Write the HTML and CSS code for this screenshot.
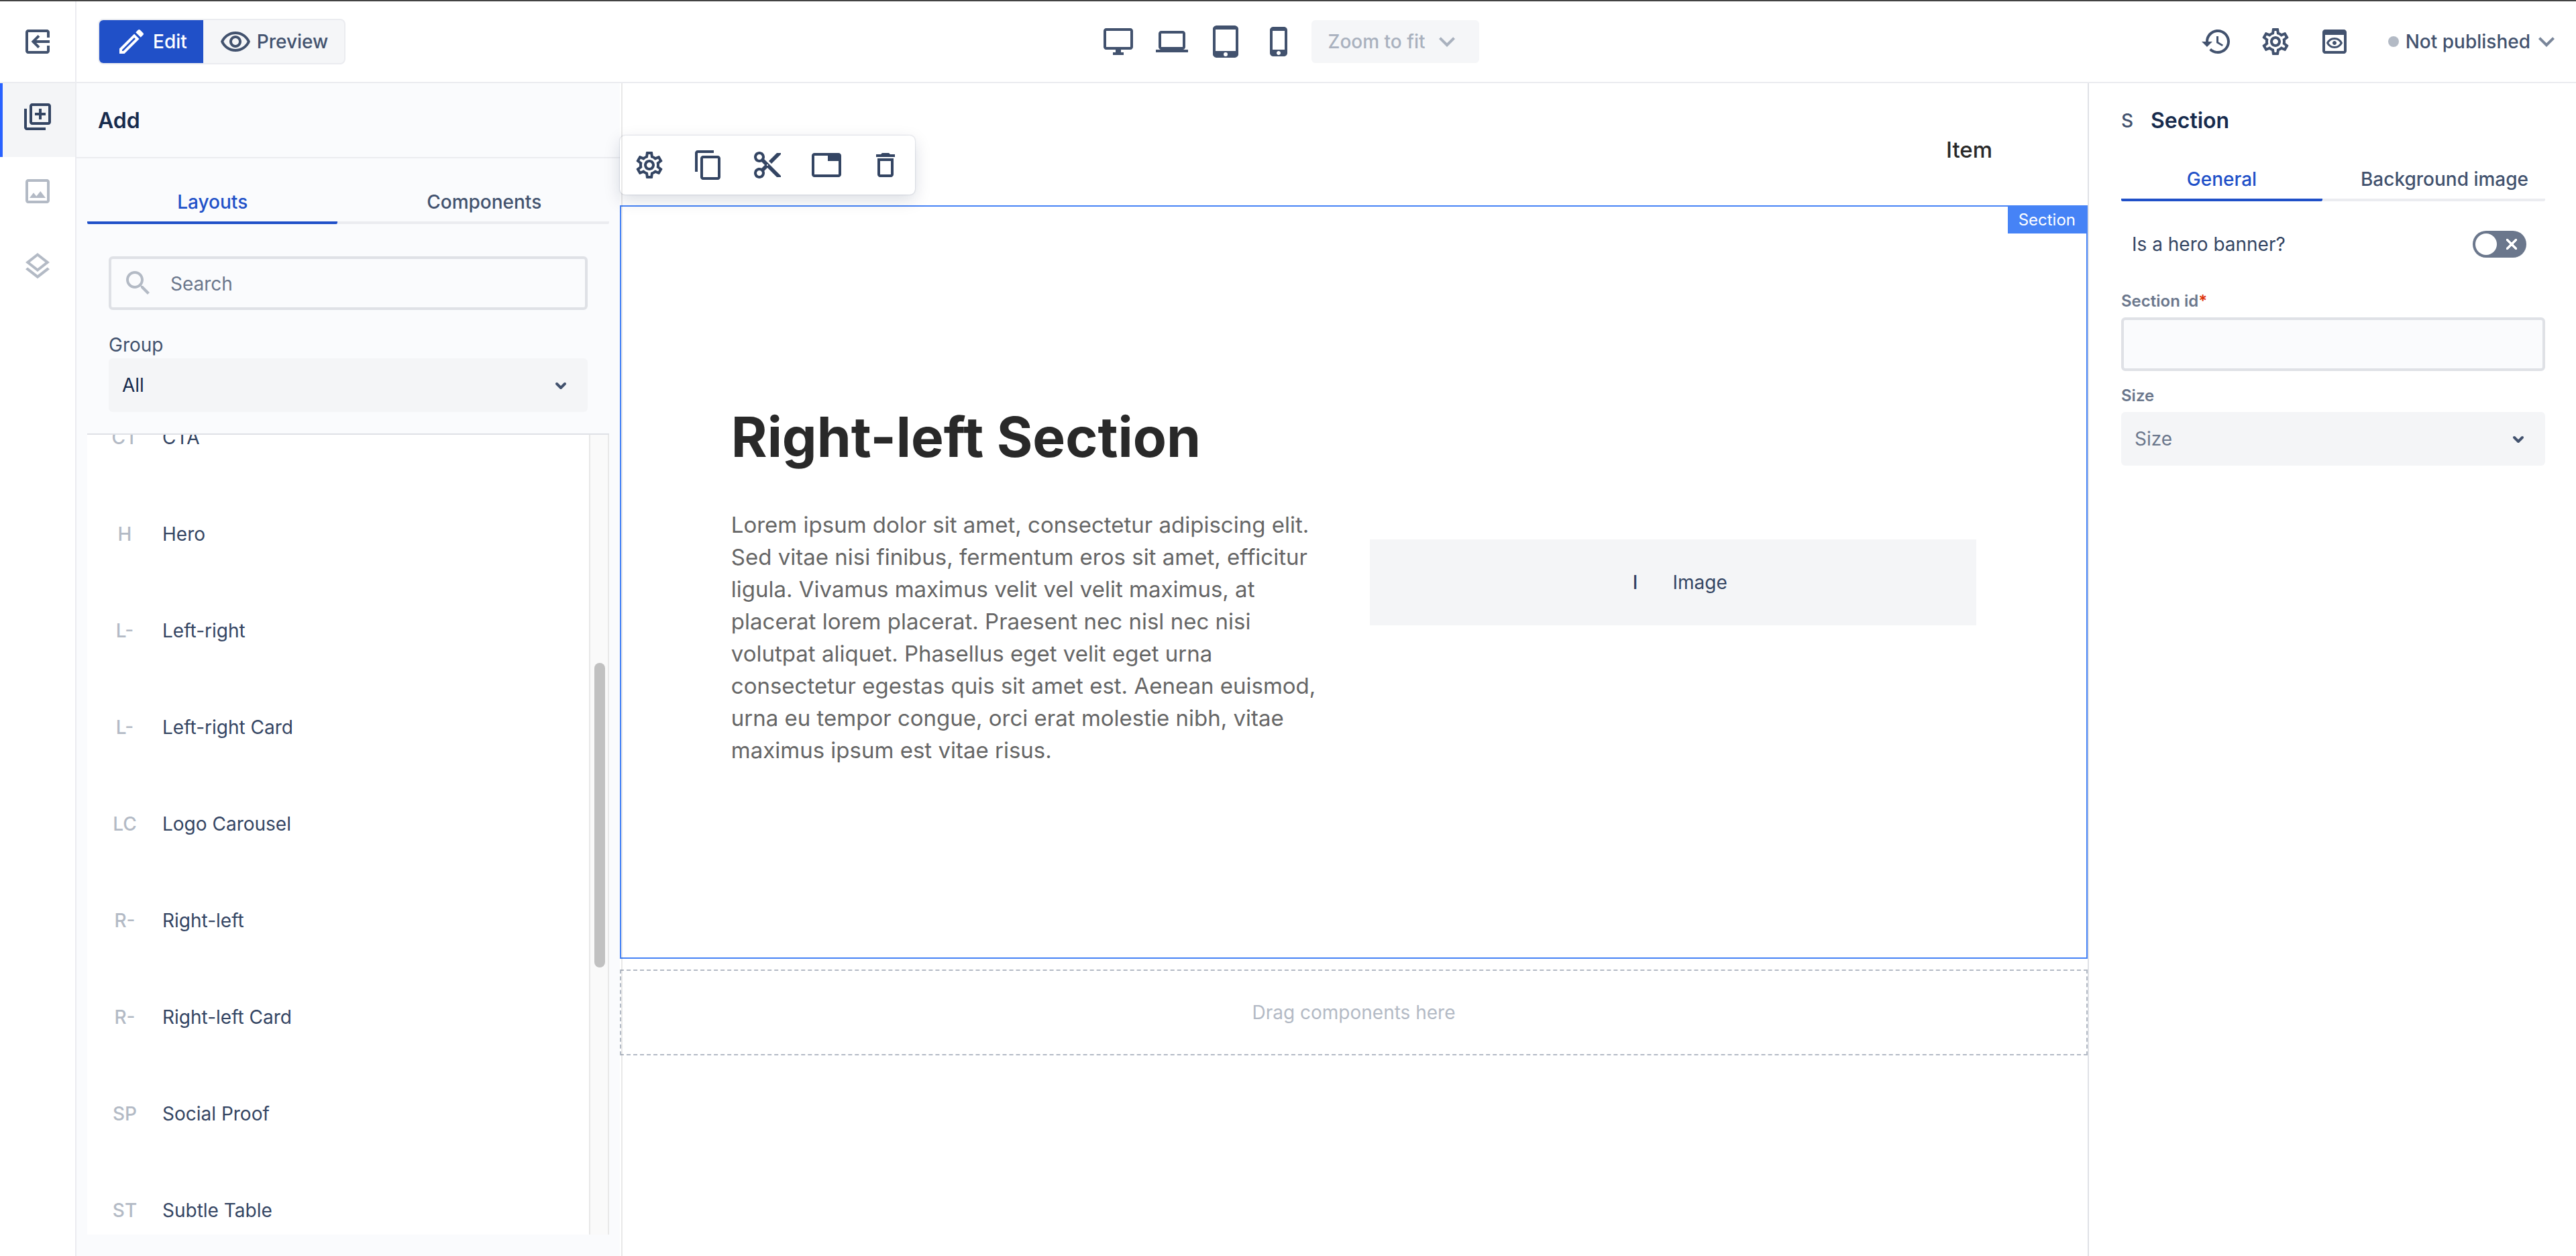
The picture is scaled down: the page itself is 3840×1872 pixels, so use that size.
FILE: index.html
```html
<!DOCTYPE html>
<html lang="en">
<head>
<meta charset="utf-8">
<title>Page editor</title>
<link rel="stylesheet" href="styles.css">
</head>
<body>
<svg class="sprite" aria-hidden="true">
  <symbol id="gear" viewBox="0 0 24 24"><path d="M19.43 12.98c.04-.32.07-.64.07-.98 0-.34-.03-.66-.07-.98l2.11-1.65c.19-.15.24-.42.12-.64l-2-3.46c-.09-.16-.26-.25-.44-.25-.06 0-.12.01-.17.03l-2.49 1c-.52-.4-1.08-.73-1.69-.98l-.38-2.65C14.46 2.18 14.25 2 14 2h-4c-.25 0-.46.18-.49.42l-.38 2.65c-.61.25-1.17.59-1.69.98l-2.49-1c-.06-.02-.12-.03-.18-.03-.17 0-.34.09-.43.25l-2 3.46c-.13.22-.07.49.12.64l2.11 1.65c-.04.32-.07.65-.07.98 0 .33.03.66.07.98l-2.11 1.65c-.19.15-.24.42-.12.64l2 3.46c.09.16.26.25.44.25.06 0 .12-.01.17-.03l2.49-1c.52.4 1.08.73 1.69.98l.38 2.65c.03.24.24.42.49.42h4c.25 0 .46-.18.49-.42l.38-2.65c.61-.25 1.17-.59 1.69-.98l2.49 1c.06.02.12.03.18.03.17 0 .34-.09.43-.25l2-3.46c.12-.22.07-.49-.12-.64l-2.11-1.65zm-1.98-1.71c.04.31.05.52.05.73 0 .21-.02.43-.05.73l-.14 1.13.89.7 1.08.84-.7 1.21-1.27-.51-1.04-.42-.9.68c-.43.32-.84.56-1.25.73l-1.06.43-.16 1.13-.2 1.35h-1.4l-.19-1.35-.16-1.13-1.06-.43c-.43-.18-.83-.41-1.23-.71l-.91-.7-1.06.43-1.27.51-.7-1.21 1.08-.84.89-.7-.14-1.13c-.03-.31-.05-.54-.05-.74s.02-.43.05-.73l.14-1.13-.89-.7-1.08-.84.7-1.21 1.27.51 1.04.42.9-.68c.43-.32.84-.56 1.25-.73l1.06-.43.16-1.13.2-1.35h1.39l.19 1.35.16 1.13 1.06.43c.43.18.83.41 1.23.71l.91.7 1.06-.43 1.27-.51.7 1.21-1.07.85-.89.7.14 1.13zM12 8c-2.210 0-4 1.790-4 4s1.790 4 4 4 4-1.790 4-4-1.790-4-4-4zm0 6c-1.100 0-2-.9-2-2s.9-2 2-2 2 .9 2 2-.9 2-2 2z"/></symbol>
</svg>

<header class="topbar">
  <div class="topbar-start">
    <div class="topbar-exit">
      <button class="icon-btn" aria-label="Exit"><svg class="icon" viewBox="0 0 24 24"><path d="M21 9V5c0-1.100-.9-2-2-2H5c-1.100 0-2 .9-2 2v14c0 1.100.9 2 2 2h14c1.100 0 2-.9 2-2v-4h-2v4H5V5h14v4z"/><path d="M21 11H11.100l2.600-2.600L12.300 7l-5 5 5 5 1.400-1.400L11.100 13H21z"/></svg></button>
    </div>
    <div class="mode">
      <button class="mode-btn mode-btn-active"><svg class="icon" viewBox="0 0 24 24"><path d="M14.060 9.020l.92.920L5.920 19H5v-.92l9.060-9.060M17.660 3c-.25 0-.51.100-.7.290l-1.830 1.830 3.750 3.750 1.830-1.830c.39-.39.39-1.020 0-1.410l-2.340-2.340c-.2-.2-.45-.29-.71-.29zm-3.600 3.190L3 17.250V21h3.750L17.810 9.940l-3.750-3.750z"/></svg>Edit</button>
      <button class="mode-btn"><svg class="icon" viewBox="0 0 24 24"><path d="M12 6.500c3.790 0 7.170 2.130 8.820 5.500-1.650 3.370-5.020 5.500-8.820 5.500S4.830 15.370 3.180 12C4.830 8.630 8.210 6.500 12 6.500m0-2C7 4.500 2.730 7.610 1 12c1.730 4.390 6 7.500 11 7.500s9.270-3.110 11-7.500c-1.730-4.390-6-7.500-11-7.500zm0 5c1.380 0 2.500 1.120 2.500 2.500s-1.120 2.500-2.500 2.500-2.500-1.120-2.500-2.500 1.120-2.500 2.500-2.500m0-2c-2.480 0-4.500 2.020-4.500 4.500s2.020 4.500 4.500 4.500 4.500-2.020 4.500-4.500-2.020-4.500-4.500-4.500z"/></svg>Preview</button>
    </div>
  </div>
  <div class="devices">
    <button class="icon-btn" aria-label="Desktop"><svg class="icon" viewBox="0 0 24 24"><path d="M21 2H3c-1.100 0-2 .9-2 2v12c0 1.100.9 2 2 2h7v2H8v2h8v-2h-2v-2h7c1.100 0 2-.9 2-2V4c0-1.100-.9-2-2-2zm0 14H3V4h18v12z"/></svg></button>
    <button class="icon-btn" aria-label="Laptop"><svg class="icon" viewBox="0 0 24 24"><path d="M20 18c1.100 0 1.990-.9 1.990-2L22 6c0-1.100-.9-2-2-2H4c-1.100 0-2 .9-2 2v10c0 1.100.9 2 2 2H0v2h24v-2h-4zM4 6h16v10H4V6z"/></svg></button>
    <button class="icon-btn" aria-label="Tablet"><svg class="icon" viewBox="0 0 24 24"><path fill-rule="evenodd" d="M18.500 0h-13C4 0 2.500 1.100 2.500 2.500v19C2.500 22.900 4 24 5.500 24h13c1.500 0 3-1.100 3-2.500v-19C21.500 1.100 20 0 18.500 0zM12 23a1.500 1.500 0 1 1 0-3 1.500 1.500 0 0 1 0 3zm7.500-4h-15V3h15z"/></svg></button>
    <button class="icon-btn" aria-label="Phone"><svg class="icon" viewBox="0 0 24 24"><path d="M15.500 1h-8C6.120 1 5 2.120 5 3.500v17C5 21.880 6.120 23 7.500 23h8c1.380 0 2.500-1.120 2.500-2.500v-17C18 2.120 16.880 1 15.500 1zm-4 21c-.83 0-1.500-.67-1.500-1.500s.67-1.500 1.500-1.500 1.500.67 1.500 1.500-.67 1.500-1.500 1.500zm4.500-4H7V4h9v14z"/></svg></button>
    <button class="zoom-btn" disabled>Zoom to fit<svg class="icon" viewBox="0 0 24 24"><path d="M7.410 8.590L12 13.170l4.590-4.580L18 10l-6 6-6-6z"/></svg></button>
  </div>
  <div class="actions">
    <button class="icon-btn" aria-label="History"><svg class="icon" viewBox="0 0 24 24"><path d="M13 3c-4.970 0-9 4.030-9 9H1l3.890 3.890.070.140L9 12H6c0-3.870 3.130-7 7-7s7 3.130 7 7-3.130 7-7 7c-1.930 0-3.680-.79-4.940-2.060l-1.420 1.420C8.270 19.990 10.510 21 13 21c4.970 0 9-4.030 9-9s-4.030-9-9-9zm-1 5v5l4.280 2.540.72-1.210-3.500-2.080V8H12z"/></svg></button>
    <button class="icon-btn" aria-label="Settings"><svg class="icon"><use href="#gear"/></svg></button>
    <button class="icon-btn" aria-label="Page preview"><svg class="icon" viewBox="0 0 24 24"><path d="M19 3H5c-1.110 0-2 .9-2 2v14c0 1.100.89 2 2 2h14c1.100 0 2-.9 2-2V5c0-1.100-.89-2-2-2zm0 16H5V7h14v12zm-7-8.500c1.840 0 3.480.96 4.340 2.500-.86 1.540-2.500 2.500-4.340 2.500S8.520 14.540 7.660 13c.86-1.540 2.500-2.500 4.340-2.500M12 9c-2.730 0-5.060 1.660-6 4 .94 2.340 3.270 4 6 4s5.060-1.660 6-4c-.94-2.340-3.270-4-6-4zm0 5.500c-.83 0-1.500-.67-1.500-1.500s.67-1.500 1.500-1.500 1.500.67 1.500 1.500-.67 1.500-1.500 1.500z"/></svg></button>
    <button class="status"><span class="status-dot"></span>Not published<svg class="icon" viewBox="0 0 24 24"><path d="M7.410 8.590L12 13.170l4.590-4.580L18 10l-6 6-6-6z"/></svg></button>
  </div>
</header>

<div class="workspace">
  <nav class="rail">
    <button class="rail-btn rail-btn-active" aria-label="Add"><svg class="icon" viewBox="0 0 24 24"><path d="M4 6H2v14c0 1.100.9 2 2 2h14v-2H4V6zm16-4H8c-1.100 0-2 .9-2 2v12c0 1.100.9 2 2 2h12c1.100 0 2-.9 2-2V4c0-1.100-.9-2-2-2zm0 14H8V4h12v12zm-7-2h2v-3h3V9h-3V6h-2v3h-3v2h3z"/></svg></button>
    <button class="rail-btn" aria-label="Images"><svg class="icon" viewBox="0 0 24 24"><path d="M19 3H5c-1.100 0-2 .9-2 2v14c0 1.100.9 2 2 2h14c1.100 0 2-.9 2-2V5c0-1.100-.9-2-2-2zm0 16H5V5h14v14zM6 17l3-3.860 2.140 2.580L14.140 12 18 17z"/></svg></button>
    <button class="rail-btn" aria-label="Layers"><svg class="icon" viewBox="0 0 24 24"><path d="M11.990 18.540l-7.370-5.730L3 14.070l9 7 9-7-1.630-1.270zM12 16l7.360-5.730L21 9l-9-7-9 7 1.630 1.270L12 16zm0-11.470L17.740 9 12 13.470 6.260 9 12 4.530z"/></svg></button>
  </nav>

  <aside class="library">
    <h2 class="library-title">Add</h2>
    <div class="library-body">
      <div class="tabs" role="tablist">
        <button class="tab tab-active" role="tab" aria-selected="true">Layouts</button>
        <button class="tab" role="tab" aria-selected="false">Components</button>
      </div>
      <div class="filters">
        <div class="search">
          <svg class="icon" viewBox="0 0 24 24"><path d="M15.500 14h-.79l-.28-.27C15.410 12.590 16 11.110 16 9.500 16 5.910 13.090 3 9.500 3S3 5.910 3 9.500 5.910 16 9.500 16c1.610 0 3.090-.59 4.230-1.570l.27.28v.79l5 4.990L20.490 19l-4.990-5zm-6 0C7.010 14 5 11.990 5 9.500S7.010 5 9.500 5 14 7.010 14 9.500 11.990 14 9.500 14z"/></svg>
          <input class="search-input" type="text" placeholder="Search" aria-label="Search">
        </div>
        <label class="group-label" for="group">Group</label>
        <div class="select">
          <select id="group"><option>All</option></select>
          <svg class="select-arrow" viewBox="0 0 16 10"><path d="M2 2l6 6 6-6"/></svg>
        </div>
      </div>
      <div class="list">
        <ul class="list-items">
          <li class="entry"><span class="entry-mark">CT</span>CTA</li>
          <li class="entry"><span class="entry-mark">H</span>Hero</li>
          <li class="entry"><span class="entry-mark">L-</span>Left-right</li>
          <li class="entry"><span class="entry-mark">L-</span>Left-right Card</li>
          <li class="entry"><span class="entry-mark">LC</span>Logo Carousel</li>
          <li class="entry"><span class="entry-mark">R-</span>Right-left</li>
          <li class="entry"><span class="entry-mark">R-</span>Right-left Card</li>
          <li class="entry"><span class="entry-mark">SP</span>Social Proof</li>
          <li class="entry"><span class="entry-mark">ST</span>Subtle Table</li>
        </ul>
        <div class="scrollbar"><div class="scrollbar-thumb"></div></div>
      </div>
    </div>
  </aside>

  <main class="canvas">
    <div class="site-nav"><a class="site-link" href="#">Item</a></div>
    <section class="block">
      <div class="toolbar" role="toolbar">
        <button class="icon-btn" aria-label="Settings"><svg class="icon"><use href="#gear"/></svg></button>
        <button class="icon-btn" aria-label="Copy"><svg class="icon" viewBox="0 0 24 24"><path d="M16 1H4c-1.100 0-2 .9-2 2v14h2V3h12V1zm3 4H8c-1.100 0-2 .9-2 2v14c0 1.100.9 2 2 2h11c1.100 0 2-.9 2-2V7c0-1.100-.9-2-2-2zm0 16H8V7h11v14z"/></svg></button>
        <button class="icon-btn" aria-label="Cut"><svg class="icon" viewBox="0 0 24 24"><path d="M9.640 7.640c.23-.5.36-1.050.36-1.640 0-2.210-1.790-4-4-4S2 3.790 2 6s1.790 4 4 4c.59 0 1.140-.13 1.640-.36L10 12l-2.360 2.360C7.140 14.130 6.590 14 6 14c-2.210 0-4 1.790-4 4s1.790 4 4 4 4-1.790 4-4c0-.59-.13-1.140-.36-1.640L12 14l7 7h3v-1L9.640 7.640zM6 8c-1.100 0-2-.89-2-2s.9-2 2-2 2 .89 2 2-.9 2-2 2zm0 12c-1.100 0-2-.89-2-2s.9-2 2-2 2 .89 2 2-.9 2-2 2zm6-7.500c-.28 0-.5-.22-.5-.5s.22-.5.5-.5.5.22.5.5-.22.500-.5.500zM19 3l-6 6 2 2 7-7V3z"/></svg></button>
        <button class="icon-btn" aria-label="Template"><svg class="icon" viewBox="0 0 24 24"><path d="M21 3H3c-1.100 0-2 .9-2 2v14c0 1.100.9 2 2 2h18c1.100 0 2-.9 2-2V5c0-1.100-.9-2-2-2zm0 16H3V5h10v4h8v10z"/></svg></button>
        <button class="icon-btn" aria-label="Delete"><svg class="icon" viewBox="0 0 24 24"><path d="M6 19c0 1.100.9 2 2 2h8c1.100 0 2-.9 2-2V7H6v12zM8 9h8v10H8V9zm7.500-5l-1-1h-5l-1 1H5v2h14V4z"/></svg></button>
      </div>
      <span class="block-tag">Section</span>
      <div class="block-content">
        <div class="copy">
          <h1>Right-left Section</h1>
          <p>Lorem ipsum dolor sit amet, consectetur adipiscing elit.<br>
          Sed vitae nisi finibus, fermentum eros sit amet, efficitur<br>
          ligula. Vivamus maximus velit vel velit maximus, at<br>
          placerat lorem placerat. Praesent nec nisl nec nisi<br>
          volutpat aliquet. Phasellus eget velit eget urna<br>
          consectetur egestas quis sit amet est. Aenean euismod,<br>
          urna eu tempor congue, orci erat molestie nibh, vitae<br>
          maximus ipsum est vitae risus.</p>
        </div>
        <div class="placeholder"><span class="placeholder-mark">I</span>Image</div>
      </div>
    </section>
    <div class="dropzone">Drag components here</div>
  </main>

  <aside class="props">
    <h2 class="props-title"><span class="props-mark">S</span>Section</h2>
    <div class="tabs props-tabs" role="tablist">
      <button class="tab tab-active" role="tab" aria-selected="true">General</button>
      <button class="tab" role="tab" aria-selected="false">Background image</button>
    </div>
    <div class="toggle-row">
      <label for="hero">Is a hero banner?</label>
      <input class="toggle" type="checkbox" role="switch" id="hero">
    </div>
    <label class="field-label" for="section-id">Section id<span class="required">*</span></label>
    <input class="field" type="text" id="section-id">
    <label class="field-label" for="size">Size</label>
    <div class="select select-empty">
      <select id="size"><option>Size</option></select>
      <svg class="select-arrow" viewBox="0 0 16 10"><path d="M2 2l6 6 6-6"/></svg>
    </div>
  </aside>
</div>
</body>
</html>
```
FILE: styles.css
```css
:root {
  --navy: #172b4d;
  --ink: #344563;
  --slate: #42526e;
  --muted: #6b778c;
  --faint: #b3bac5;
  --line: #ebecf0;
  --field-line: #dfe1e6;
  --panel: #fafbfd;
  --fill: #f4f5f7;
  --blue: #2050c8;
  --select: #4683f6;
}

* { box-sizing: border-box; }

html, body { height: 100%; }

body {
  margin: 0;
  display: flex;
  flex-direction: column;
  border-top: 2px solid #434343;
  background: #fff;
  color: var(--ink);
  font: 28px/40px Inter, "Liberation Sans", sans-serif;
  overflow: hidden;
}

button, input, select {
  margin: 0;
  padding: 0;
  border: 0;
  background: none;
  color: inherit;
  font: inherit;
}

h1, h2, p, ul { margin: 0; padding: 0; }

.sprite { position: absolute; width: 0; height: 0; }
.icon { display: block; flex: none; width: 48px; height: 48px; fill: currentColor; }
.icon-btn { flex: none; width: 48px; height: 48px; color: var(--slate); }

/* Top bar */
.topbar {
  flex: none;
  display: grid; grid-template-columns: 1fr auto 1fr; align-items: center;
  height: 122px; border-bottom: 2px solid var(--line);
}
.topbar-start { display: flex; align-items: center; gap: 32px; height: 100%; }
.topbar-exit {
  display: flex; align-items: center; justify-content: center;
  width: 114px; height: 100%; border-right: 2px solid var(--line);
}
.mode {
  display: flex;
  border: 2px solid var(--line); border-radius: 8px;
  background: #f5f6f8; overflow: hidden;
}
.mode-btn {
  display: flex; align-items: center; gap: 8px;
  height: 64px; padding: 0 24px;
  color: var(--slate); font-weight: 500;
}
.mode-btn-active { background: var(--blue); color: #fff; }
.devices { display: flex; align-items: center; padding-left: 8px; }
.devices .icon-btn + .icon-btn { margin-left: 32px; }
.zoom-btn {
  display: flex; align-items: center; gap: 8px;
  height: 64px; margin-left: 24px; padding: 0 24px; border-radius: 6px;
  background: #f5f6f8; color: #a9b1be; font-weight: 500;
}
.actions {
  display: flex; align-items: center; justify-content: flex-end; gap: 40px;
  padding-right: 20px;
}
.status { display: flex; align-items: center; margin-left: 16px; color: var(--slate); font-weight: 500; }
.status .icon { color: #7a869a; }
.status-dot { width: 16px; height: 16px; margin-right: 10px; border-radius: 50%; background: var(--faint); }

/* Body of the editor */
.workspace { flex: 1; display: flex; min-height: 0; }

.rail { flex: none; width: 114px; border-right: 2px solid var(--line); }
.rail-btn {
  display: flex; align-items: center; justify-content: center;
  width: 100%; height: 112px; padding-bottom: 10px; color: var(--faint);
}
.rail-btn-active {
  height: 110px; padding-right: 4px; border-left: 4px solid #2962ff;
  background: var(--fill); color: var(--ink);
}

.library {
  flex: none; display: flex; flex-direction: column;
  width: 810px; background: var(--panel);
}
.library-title {
  padding: 36px 32px 34px; border-bottom: 2px solid var(--line);
  color: var(--navy); font-size: 32px; font-weight: 600;
}
.library-body {
  flex: 1; display: flex; flex-direction: column; min-height: 0;
  padding: 44px 16px 32px;
}

.tabs { display: flex; flex: none; }
.tab {
  flex: 1; height: 54px; padding: 0 0 8px 32px;
  border-bottom: 4px solid var(--line); border-radius: 2px;
  color: var(--slate); font-weight: 500;
}
.tab-active { flex: 0 0 48%; padding-left: 0; border-color: var(--blue); color: var(--blue); }

.filters { padding: 48px 32px 32px; }
.search {
  display: flex; align-items: center; gap: 24px;
  height: 80px; padding: 0 16px;
  border: 4px solid var(--field-line); border-radius: 6px; color: var(--faint);
}
.search-input { flex: 1; min-width: 0; padding-top: 2px; color: var(--navy); outline: 0; }
.search-input::placeholder { color: var(--muted); opacity: 1; }
.group-label { display: block; padding-top: 32px; color: var(--slate); }

.select { position: relative; height: 80px; border-radius: 6px; background: var(--fill); color: var(--navy); }
.select select { width: 100%; height: 100%; padding: 0 20px; appearance: none; }
.select-arrow {
  position: absolute; right: 32px; top: 36px; width: 16px; height: 10px;
  fill: none; stroke: var(--slate); stroke-width: 4; stroke-linecap: round; stroke-linejoin: round;
  overflow: visible; pointer-events: none;
}
.select-empty { color: var(--muted); }

.list {
  flex: 1; display: flex; min-height: 0;
  border-top: 2px solid var(--field-line); background: #fff; overflow: hidden;
}
.list-items { flex: 1; margin-top: -68px; list-style: none; }
.entry { display: flex; align-items: center; gap: 32px; height: 144px; padding-left: 32px; }
.entry-mark { width: 48px; color: var(--faint); font-weight: 500; text-align: center; }
.scrollbar {
  width: 30px; padding: 340px 4px 0 6px;
  border: solid #e8e8e8; border-width: 0 2px; background: #fafafa;
}
.scrollbar-thumb { width: 16px; height: 454px; border-radius: 8px; background: #c1c1c1; }

/* Canvas */
.canvas { position: relative; flex: 1; min-width: 0; }
.canvas::before {
  content: ""; position: absolute; z-index: 3; top: 0; bottom: 0; left: 2px; width: 2px;
  background: rgba(0, 0, 0, .09); pointer-events: none;
}
.site-nav {
  display: flex; justify-content: flex-end; align-items: center;
  height: 182px; padding: 16px 142px 0 0;
}
.site-link { color: #292929; font-size: 33px; font-weight: 500; text-decoration: none; }
.block {
  position: relative; display: flex; align-items: center; justify-content: center;
  height: 1123px; border: 2px solid var(--select);
}
.toolbar {
  position: absolute; left: -2px; bottom: 100%; z-index: 2;
  display: flex; gap: 40px; margin-bottom: 18px; padding: 20px;
  border-radius: 8px; background: #fff;
  box-shadow: 0 0 2px rgba(9, 30, 66, .3), 0 8px 24px rgba(9, 30, 66, .15);
}
.toolbar .icon-btn { color: var(--ink); }
.block-tag {
  position: absolute; top: -2px; right: -2px; padding: 2px 18px 0 16px;
  background: var(--select); color: #fff; font-size: 24px; line-height: 40px;
}
.block-content {
  display: grid; grid-template-columns: 1fr 1fr; align-items: center; gap: 48px;
  width: 85%;
}
.copy { color: #666; font-size: 33px; line-height: 48px; white-space: nowrap; }
.copy h1 { margin-bottom: 48px; color: #292929; font-size: 82px; line-height: 116px; font-weight: 700; }
.placeholder {
  display: flex; align-items: center; justify-content: center; gap: 32px;
  height: 128px; background: var(--fill);
}
.placeholder-mark { width: 48px; font-weight: 500; text-align: center; }
.dropzone {
  display: flex; align-items: center; justify-content: center;
  height: 128px; margin-top: 16px; border: 2px dashed var(--faint); color: var(--faint);
}

/* Properties */
.props { flex: none; width: 728px; padding: 36px 46px 0 48px; border-left: 2px solid var(--field-line); }
.props-title { display: flex; color: var(--navy); font-size: 32px; font-weight: 600; }
.props-mark { width: 44px; color: var(--slate); font-size: 28px; font-weight: 500; }
.props-tabs { margin-top: 46px; }
.props-tabs .tab-active { flex-basis: 300px; }
.toggle-row {
  display: flex; align-items: center; justify-content: space-between;
  margin-top: 44px; padding: 0 28px 0 16px;
}
.toggle {
  position: relative; width: 80px; height: 40px; border-radius: 20px;
  background: var(--muted); appearance: none;
}
.toggle::before {
  content: ""; position: absolute; top: 4px; left: 4px;
  width: 32px; height: 32px; border-radius: 50%; background: #fff;
}
.toggle::after {
  content: ""; position: absolute; top: 12px; right: 14px; width: 16px; height: 16px;
  background:
    linear-gradient(45deg, transparent 43%, #fff 43% 57%, transparent 57%),
    linear-gradient(-45deg, transparent 43%, #fff 43% 57%, transparent 57%);
}
.field-label {
  display: block; margin-top: 49px; color: var(--muted);
  font-size: 24px; line-height: 32px; font-weight: 600;
}
.required { color: #de350b; }
.field {
  display: block; width: 100%; height: 80px; margin-top: 8px; padding: 0 16px;
  border: 4px solid var(--field-line); border-radius: 6px; background: var(--panel);
}
.field + .field-label { margin-top: 21px; }
.field-label + .select { margin-top: 8px; }
```
